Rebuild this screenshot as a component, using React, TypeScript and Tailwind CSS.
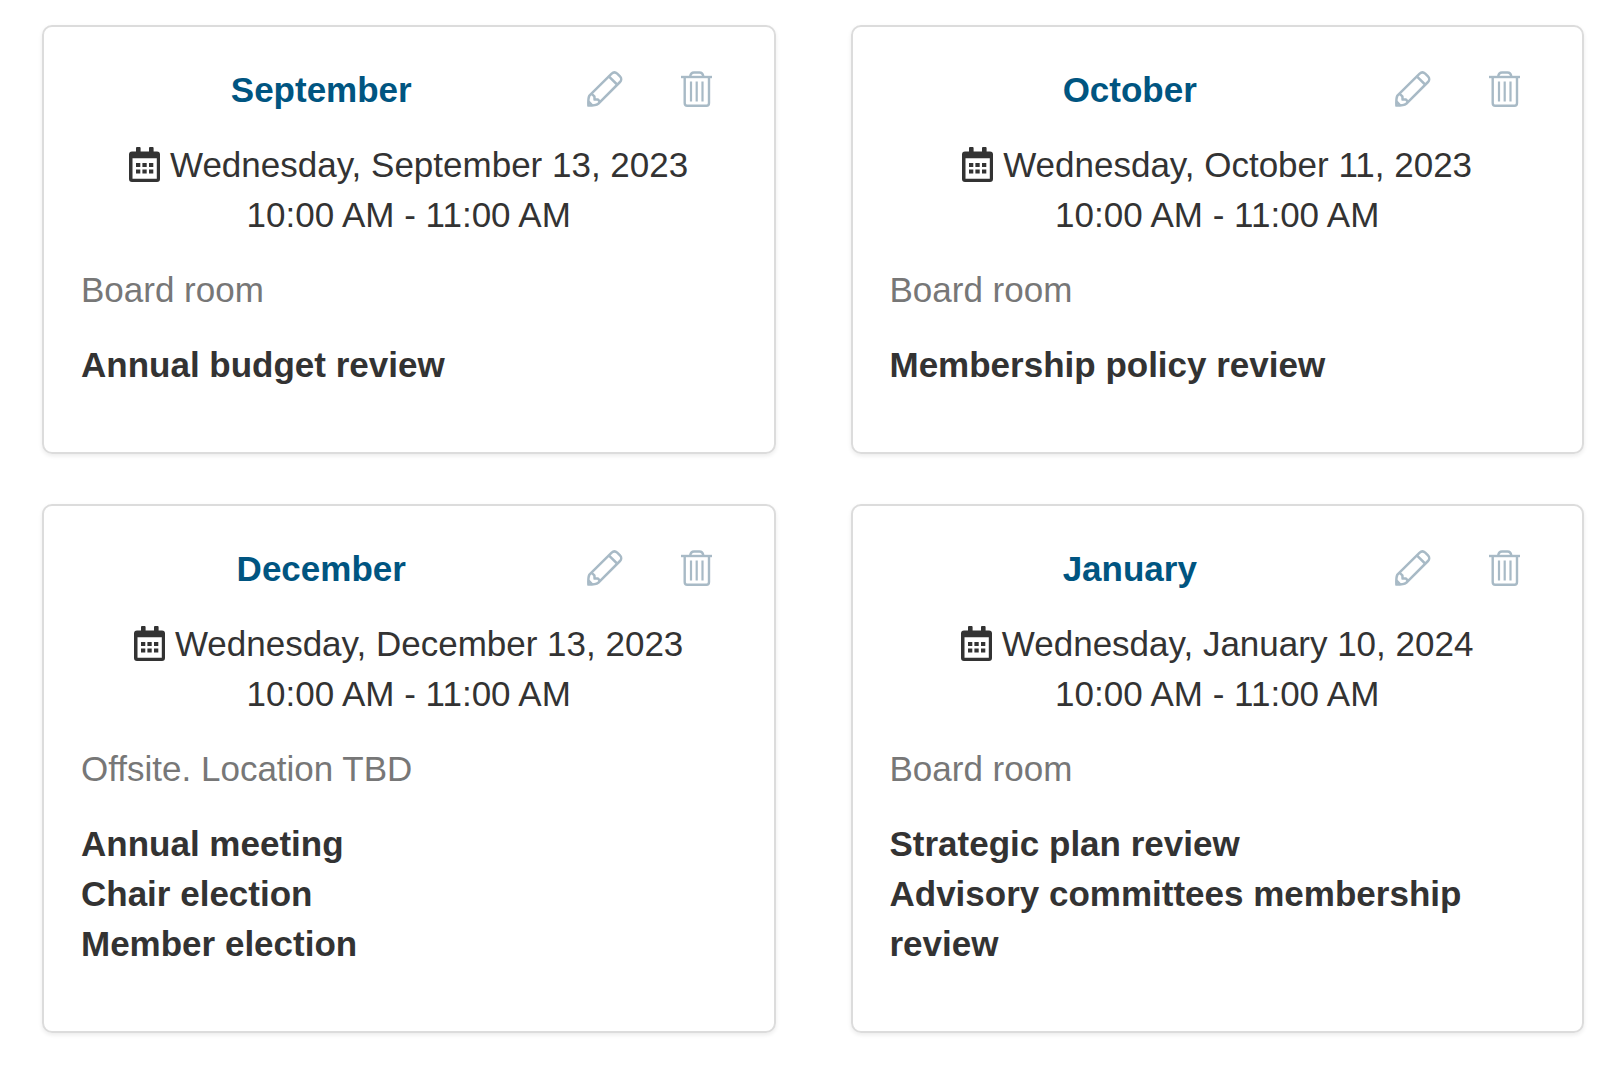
type Meeting = {
  month: string;
  date: string;
  time: string;
  location: string;
  agenda: string[];
};

const meetings: Meeting[] = [
  {
    month: "September",
    date: "Wednesday, September 13, 2023",
    time: "10:00 AM - 11:00 AM",
    location: "Board room",
    agenda: ["Annual budget review"],
  },
  {
    month: "October",
    date: "Wednesday, October 11, 2023",
    time: "10:00 AM - 11:00 AM",
    location: "Board room",
    agenda: ["Membership policy review"],
  },
  {
    month: "December",
    date: "Wednesday, December 13, 2023",
    time: "10:00 AM - 11:00 AM",
    location: "Offsite. Location TBD",
    agenda: ["Annual meeting", "Chair election", "Member election"],
  },
  {
    month: "January",
    date: "Wednesday, January 10, 2024",
    time: "10:00 AM - 11:00 AM",
    location: "Board room",
    agenda: ["Strategic plan review", "Advisory committees membership review"],
  },
];

function PencilIcon() {
  return (
    <svg width="36" height="36" viewBox="0 0 36 36" fill="none" stroke="currentColor" strokeWidth="2.5" strokeLinejoin="round" aria-hidden="true">
      <path d="M2.4 24.6 24.4 2.8C26.2 1.1 28.6 1.1 30.2 2.6L33 5.4C34.6 7 34.6 9.4 33 11L11.2 32.8C9.5 34.2 5 34.6 1.4 34.6C1.2 30.6 1.2 26.8 2.4 24.6Z" />
      <path d="M21.8 5.3 30.6 14" />
      <path d="M4.6 22.8 7.4 25.4 7.6 28.6 11 28.4 13 31M1.6 30.6 5.2 34.4" />
    </svg>
  );
}

function TrashIcon() {
  return (
    <svg width="31" height="36" viewBox="0 0 31 36" fill="none" stroke="currentColor" strokeWidth="2.4" aria-hidden="true">
      <path d="M0 6H31" />
      <path d="M9.2 5.5C9.6 2.6 11 1.5 13 1.5H18.5C20.5 1.5 21.9 2.6 22.3 5.5" />
      <path d="M3.7 6V32C3.7 33.8 4.6 34.7 6.2 34.7H25.5C27.1 34.7 28 33.8 28 32V6" />
      <path strokeWidth="2.2" d="M10 10.5V30.5M15.7 10.5V30.5M21.5 10.5V30.5" />
    </svg>
  );
}

function CalendarIcon() {
  return (
    <svg className="inline-block align-[-5px]" width="31" height="35" viewBox="0 0 31 35" fill="currentColor" aria-hidden="true">
      <path fillRule="evenodd" d="M3 4.6H7V1Q7 0 8 0H10.6Q11.6 0 11.6 1V4.6H20V1Q20 0 21 0H23.6Q24.6 0 24.6 1V4.6H28Q31 4.6 31 7.6V32Q31 35 28 35H3Q0 35 0 32V7.6Q0 4.6 3 4.6ZM3.5 11.3V31.8H27.8V11.3Z" />
      <path d="M7 16h4.3v4H7zM13.4 16h4.3v4h-4.3zM20 16h4.3v4H20zM7 22.4h4.3v4.2H7zM13.4 22.4h4.3v4.2h-4.3zM20 22.4h4.3v4.2H20z" />
    </svg>
  );
}

function MeetingCard({ meeting }: { meeting: Meeting }) {
  return (
    <article className="rounded-[10px] border-2 border-[#dcdcdc] px-[37px] pt-[38px] pb-[37px] shadow-[0_2px_4px_rgba(0,0,0,0.08)]">
      <div className="flex items-center">
        <h2 className="flex-1 text-center font-bold text-[#005581]">{meeting.month}</h2>
        <div className="flex gap-2 text-[#a8bac6]">
          <button type="button" className="px-[25px] pb-0.5" aria-label={`Edit ${meeting.month}`}>
            <PencilIcon />
          </button>
          <button type="button" className="px-[25px] pb-0.5" aria-label={`Delete ${meeting.month}`}>
            <TrashIcon />
          </button>
        </div>
      </div>

      <p className="mt-[25px] text-center">
        <CalendarIcon /> {meeting.date}
        <br />
        {meeting.time}
      </p>

      <p className="mt-[25px] text-[#777]">{meeting.location}</p>

      <ul className="my-[25px] font-bold">
        {meeting.agenda.map((item) => (
          <li key={item}>{item}</li>
        ))}
      </ul>
    </article>
  );
}

export default function App() {
  return (
    <main className="min-h-screen bg-white pt-[25px] pr-[34px] pb-8 pl-[42px] font-['Liberation_Sans',Arial,sans-serif] text-[35px] leading-[50px] text-[#333]">
      <div className="grid grid-cols-2 gap-x-[75px] gap-y-[50px]">
        {meetings.map((meeting) => (
          <MeetingCard key={meeting.month} meeting={meeting} />
        ))}
      </div>
    </main>
  );
}
